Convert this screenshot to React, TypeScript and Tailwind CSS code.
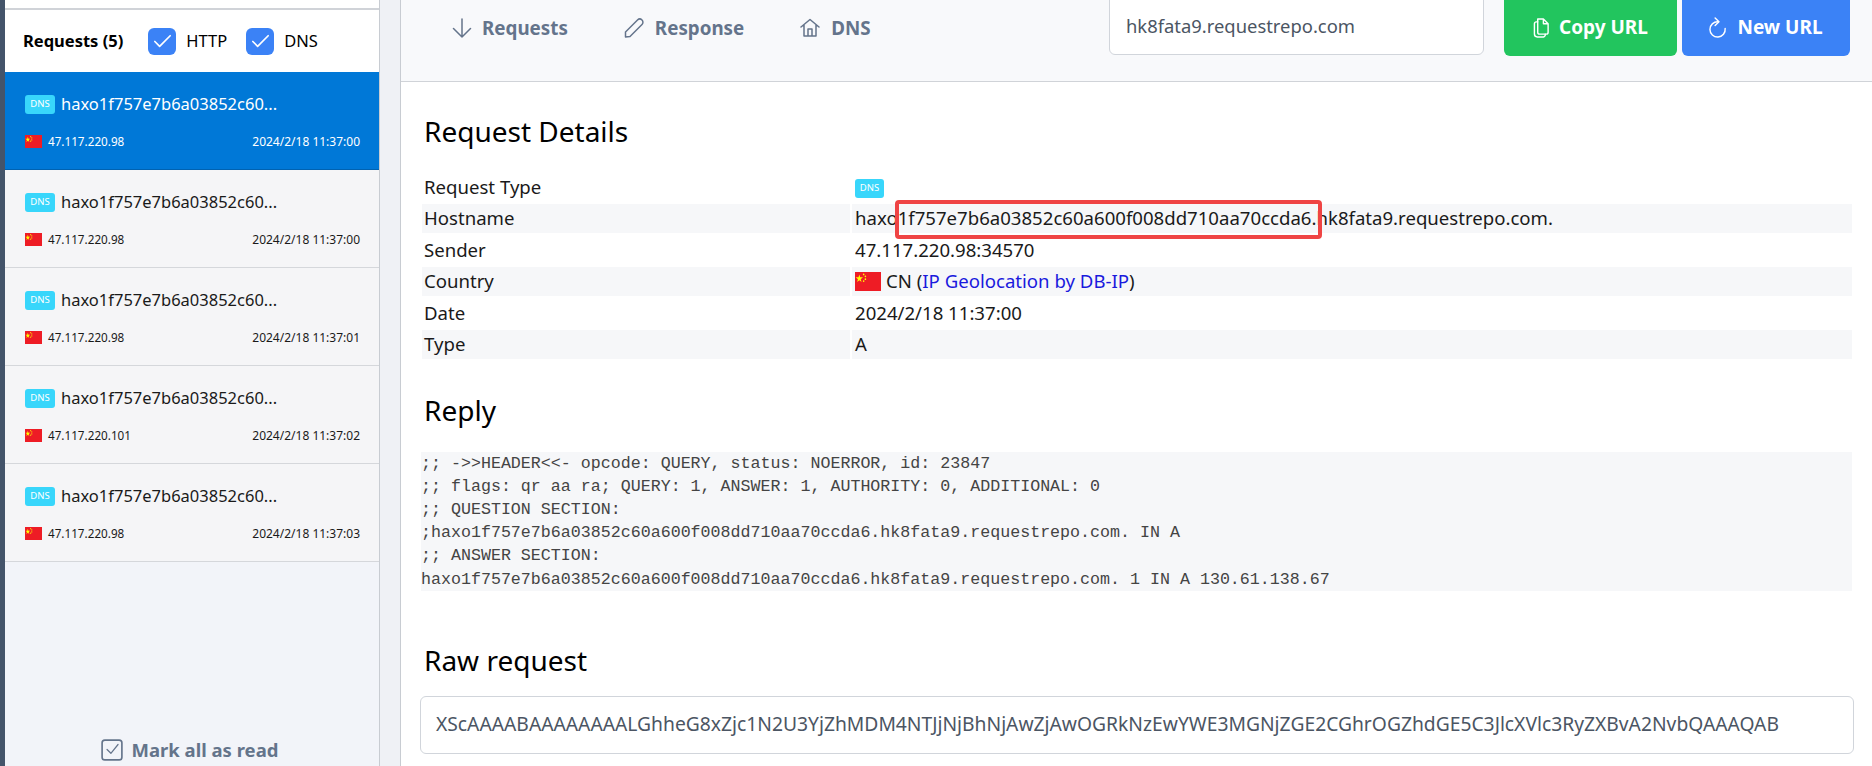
import { Check } from "lucide-react"

const requests = [
  { ip: "47.117.220.98", date: "2024/2/18 11:37:00" },
  { ip: "47.117.220.98", date: "2024/2/18 11:37:00" },
  { ip: "47.117.220.98", date: "2024/2/18 11:37:01" },
  { ip: "47.117.220.101", date: "2024/2/18 11:37:02" },
  { ip: "47.117.220.98", date: "2024/2/18 11:37:03" },
]

const replyText = `;; ->>HEADER<<- opcode: QUERY, status: NOERROR, id: 23847
;; flags: qr aa ra; QUERY: 1, ANSWER: 1, AUTHORITY: 0, ADDITIONAL: 0
;; QUESTION SECTION:
;haxo1f757e7b6a03852c60a600f008dd710aa70ccda6.hk8fata9.requestrepo.com. IN A
;; ANSWER SECTION:
haxo1f757e7b6a03852c60a600f008dd710aa70ccda6.hk8fata9.requestrepo.com. 1 IN A 130.61.138.67`

const Flag = ({ className }: { className: string }) => (
  <svg viewBox="0 0 30 20" className={className} preserveAspectRatio="none">
    <rect width="30" height="20" fill="#ee1c25" />
    <polygon points="5,2.5 6,5.6 9.2,5.6 6.6,7.5 7.6,10.6 5,8.7 2.4,10.6 3.4,7.5 0.8,5.6 4,5.6" fill="#ffff00" />
    <circle cx="10" cy="2.5" r="0.9" fill="#ffff00" />
    <circle cx="12" cy="4.5" r="0.9" fill="#ffff00" />
    <circle cx="12" cy="7.5" r="0.9" fill="#ffff00" />
    <circle cx="10" cy="9.5" r="0.9" fill="#ffff00" />
  </svg>
)

const DnsBadge = ({ className }: { className: string }) => (
  <span className={`flex items-center justify-center rounded-[3px] bg-[#38d6fb] text-white ${className}`}>DNS</span>
)

const CheckBox = ({ label }: { label: string }) => (
  <div className="flex items-center">
    <div className="flex h-[27px] w-[28px] items-center justify-center rounded-[6px] bg-[#3b82f6]">
      <Check className="h-[23px] w-[23px] text-white" strokeWidth={1.75} />
    </div>
    <span className="ml-[10px] text-[16.5px] text-black">{label}</span>
  </div>
)

const Row = ({ label, striped, children }: { label: string; striped?: boolean; children: React.ReactNode }) => (
  <div className="mb-[2.5px] grid h-[29px] grid-cols-[428px_1fr] gap-[2px] text-[18.6px] text-[#1a1a1a]">
    <div className={`flex items-center px-[2px] ${striped ? "bg-[#f6f7f9]" : ""}`}>{label}</div>
    <div className={`relative flex items-center px-[3px] ${striped ? "bg-[#f6f7f9]" : ""}`}>{children}</div>
  </div>
)

const iconProps = { fill: "none", stroke: "currentColor", strokeWidth: 1.5, strokeLinecap: "round", strokeLinejoin: "round" } as const

export default function App() {
  return (
    <div className="flex h-[766px] w-[1872px] overflow-hidden bg-[#eff1f5] font-['Noto_Sans',sans-serif]">
      <div className="w-[5px] shrink-0 bg-[#44546a]" />

      <div className="flex w-[375px] shrink-0 flex-col border-r border-[#c8ccd2] bg-[#f2f4f9]">
        <div className="h-[10px] border-b-2 border-[#d0d3d8] bg-white" />
        <div className="flex h-[62px] items-center bg-white pl-[18px]">
          <span className="mr-[25px] text-[16.5px] font-bold text-black">Requests (5)</span>
          <CheckBox label="HTTP" />
          <div className="w-[19px]" />
          <CheckBox label="DNS" />
        </div>
        {requests.map((r, i) => (
          <div
            key={i}
            className={`h-[98px] border-b pl-[20px] pr-[19px] pt-[22px] ${
              i === 0 ? "border-[#0062b1] bg-[#0078d7] text-white" : "border-[#d5d7db] bg-[#f5f5f7] text-[#1a1a1a]"
            }`}
          >
            <div className="flex items-center">
              <DnsBadge className="h-[19px] w-[30px] text-[9.5px]" />
              <span className="ml-[6px] text-[16.5px] leading-[20px]">haxo1f757e7b6a03852c60...</span>
            </div>
            <div className="mt-[19px] flex items-center justify-between text-[12px]">
              <div className="flex items-center">
                <Flag className="h-[13px] w-[17px]" />
                <span className="ml-[6px] text-[11.7px]">{r.ip}</span>
              </div>
              <span>{r.date}</span>
            </div>
          </div>
        ))}
        <div className="mt-auto mb-[2px] flex items-center justify-center pr-[5px] text-[#64748b]">
          <svg viewBox="0 0 20 20" className="h-[22px] w-[22px]" {...iconProps}>
            <rect x="1" y="1" width="18" height="18" rx="2.5" />
            <path d="M5.5 9.5 L9 13 L15.5 5" strokeWidth={1.1} />
          </svg>
          <span className="ml-[9px] text-[18.5px] font-bold">Mark all as read</span>
        </div>
      </div>

      <div className="ml-[20px] flex min-w-0 flex-1 flex-col border-l border-[#c8ccd2] bg-white">
        <div className="flex h-[82px] shrink-0 items-start border-b border-[#d0d3d8] bg-[#f8f9fb]">
          <div className="mt-[14px] flex items-center pl-[51px] text-[#64748b]">
            <svg viewBox="0 0 20 20" className="h-[20px] w-[20px]" {...iconProps}>
              <path d="M10 1 V19 M1.5 10.5 L10 19 L18.5 10.5" />
            </svg>
            <span className="ml-[10px] text-[18.8px] font-bold">Requests</span>
            <svg viewBox="0 0 20 20" className="ml-[56px] h-[20px] w-[20px]" {...iconProps}>
              <path d="M1.5 14 L13.5 2 A2.8 2.8 0 0 1 18 6.5 L6 18.5 L1.5 19 Z" />
            </svg>
            <span className="ml-[11px] text-[18.8px] font-bold">Response</span>
            <svg viewBox="0 0 20 20" className="ml-[56px] h-[20px] w-[20px]" {...iconProps}>
              <path d="M1 9 L10 1.5 L19 9 M4 7 V18 H16 V7 M8 18 V11 H12 V18" />
            </svg>
            <span className="ml-[11px] text-[18.8px] font-bold">DNS</span>
          </div>
          <div className="ml-auto mr-[22px] -mt-[6px] flex">
            <div className="flex h-[61px] w-[375px] items-center rounded-[6px] border border-[#d1d5db] bg-white pl-[16px] pt-[3px] text-[18.4px] text-[#4b5563]">
              hk8fata9.requestrepo.com
            </div>
            <button className="ml-[20px] flex h-[62px] w-[173px] items-center justify-center rounded-[6px] bg-[#22c55e] pt-[4px] text-[19px] font-bold text-white">
              <svg viewBox="0 0 18 22" className="mr-[9px] h-[21px] w-[17px]" {...iconProps}>
                <path d="M5 2 H11 L16 7 V16 A2 2 0 0 1 14 18 H7 A2 2 0 0 1 5 16 Z M11 2 V7 H16" />
                <path d="M5 5 H3.5 A2 2 0 0 0 1.5 7 V18 A3 3 0 0 0 4.5 21 H11 A2.5 2.5 0 0 0 13 18" />
              </svg>
              Copy URL
            </button>
            <button className="ml-[5px] flex h-[62px] w-[168px] items-center justify-center rounded-[6px] bg-[#3b82f6] pt-[4px] text-[19px] font-bold text-white">
              <svg viewBox="0 0 18 22" className="mr-[10px] h-[21px] w-[18px]" {...iconProps}>
                <path d="M9 5 A8 8 0 1 0 16.5 12" />
                <path d="M6 1 L10 5 L6 9" />
              </svg>
              New URL
            </button>
          </div>
        </div>

        <div className="pl-[21px] pr-[20px] pt-[31px]">
          <h2 className="mb-[23px] ml-[2px] text-[28px] leading-[36px] text-black">Request Details</h2>
          <Row label="Request Type">
            <DnsBadge className="mt-[3px] h-[19px] w-[29px] text-[9.5px]" />
          </Row>
          <Row label="Hostname" striped>
            haxo1f757e7b6a03852c60a600f008dd710aa70ccda6.hk8fata9.requestrepo.com.
            <div className="absolute left-[43px] top-[-4px] h-[39px] w-[427px] rounded-[4px] border-[4px] border-[#ef4444]" />
          </Row>
          <Row label="Sender">47.117.220.98:34570</Row>
          <Row label="Country" striped>
            <Flag className="mr-[5px] h-[19px] w-[26px]" />
            CN (<span className="text-[#1a1add]">IP Geolocation by DB-IP</span>)
          </Row>
          <Row label="Date">2024/2/18 11:37:00</Row>
          <Row label="Type" striped>A</Row>

          <h2 className="mb-[24px] mt-[33px] ml-[2px] text-[28px] leading-[36px] text-black">Reply</h2>
          <pre className="-ml-[1px] bg-[#f6f7f9] font-['Liberation_Mono',monospace] text-[16.65px] leading-[23.2px] text-[#444]">
            {replyText}
          </pre>

          <h2 className="mt-[51px] mb-[18px] ml-[2px] text-[28px] leading-[36px] text-black">Raw request</h2>
          <div className="-mr-[2px] -ml-[2px] flex h-[58px] items-center rounded-[6px] border border-[#d1d5db] pl-[15px] text-[19.27px] text-[#4b5563]">
            XScAAAABAAAAAAAALGhheG8xZjc1N2U3YjZhMDM4NTJjNjBhNjAwZjAwOGRkNzEwYWE3MGNjZGE2CGhrOGZhdGE5C3JlcXVlc3RyZXBvA2NvbQAAAQAB
          </div>
        </div>
      </div>
    </div>
  )
}
